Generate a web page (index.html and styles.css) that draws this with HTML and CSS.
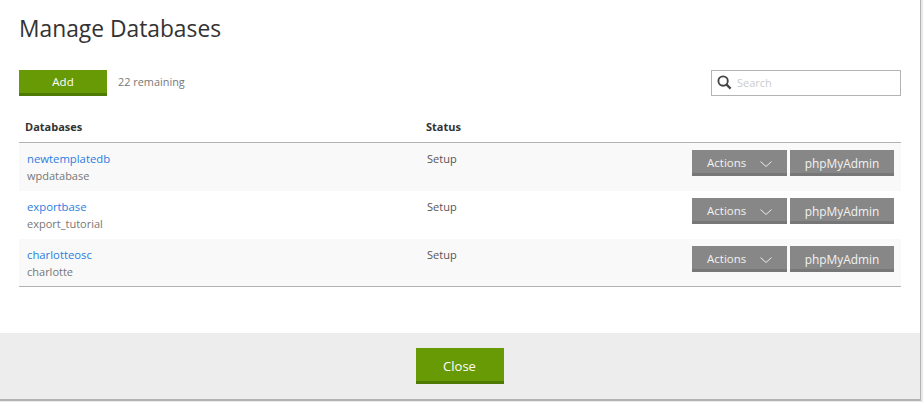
FILE: index.html
```html
<!DOCTYPE html>
<html lang="en">
<head>
  <meta charset="UTF-8" />
  <title>Manage Databases</title>
  <link rel="stylesheet" href="styles.css">
</head>
<body>

<div class="modal">
  <div class="modal-body">
    <h1>Manage Databases</h1>

    <div class="toolbar">
      <button class="btn btn-green btn-add">Add</button>
      <span class="remaining">22 remaining</span>
      <label class="search">
        <svg class="search-icon" width="15" height="15" viewBox="0 0 16 16">
          <circle cx="6.5" cy="6.5" r="5" fill="none" stroke="#444" stroke-width="2" />
          <path d="M10 10l4.5 4.5" stroke="#444" stroke-width="2.4" />
        </svg>
        <input type="text" placeholder="Search" />
      </label>
    </div>

    <table>
      <thead>
        <tr>
          <th class="col-name">Databases</th>
          <th class="col-status">Status</th>
          <th></th>
        </tr>
      </thead>
      <tbody>
        <tr>
          <td><a href="#">newtemplatedb</a><div class="sub">wpdatabase</div></td>
          <td>Setup</td>
          <td class="actions">
            <button class="btn btn-gray btn-actions">Actions
              <svg width="12" height="6" viewBox="0 0 12 6"><path d="M.5.5l5.5 5 5.5-5" fill="none" stroke="#eee" /></svg>
            </button><button class="btn btn-gray btn-php">phpMyAdmin</button>
          </td>
        </tr>
        <tr>
          <td><a href="#">exportbase</a><div class="sub">export_tutorial</div></td>
          <td>Setup</td>
          <td class="actions">
            <button class="btn btn-gray btn-actions">Actions
              <svg width="12" height="6" viewBox="0 0 12 6"><path d="M.5.5l5.5 5 5.5-5" fill="none" stroke="#eee" /></svg>
            </button><button class="btn btn-gray btn-php">phpMyAdmin</button>
          </td>
        </tr>
        <tr>
          <td><a href="#">charlotteosc</a><div class="sub">charlotte</div></td>
          <td>Setup</td>
          <td class="actions">
            <button class="btn btn-gray btn-actions">Actions
              <svg width="12" height="6" viewBox="0 0 12 6"><path d="M.5.5l5.5 5 5.5-5" fill="none" stroke="#eee" /></svg>
            </button><button class="btn btn-gray btn-php">phpMyAdmin</button>
          </td>
        </tr>
      </tbody>
    </table>
  </div>

  <div class="modal-footer">
    <button class="btn btn-green btn-close">Close</button>
  </div>
</div>

</body>
</html>
```

FILE: styles.css
```css
html, body {
  height: 100%;
}
body {
  margin: 0;
  background: #e9e9e9;
  font-family: "Open Sans", "Noto Sans", sans-serif;
  color: #333;
  overflow: hidden;
}
.modal {
  width: 921px;
  height: 401px;
  box-sizing: border-box;
  background: #fff;
  border-right: 1px solid #b3b3b3;
  border-bottom: 2px solid #b3b3b3;
  display: flex;
  flex-direction: column;
}
.modal-body {
  flex: 1;
  padding: 0 19px;
}
h1 {
  margin: 0;
  padding-top: 14px;
  font-size: 22.8px;
  font-weight: 400;
  line-height: 30px;
  color: #333;
}
.toolbar {
  display: flex;
  align-items: flex-start;
  margin-top: 26px;
  height: 26px;
}
.btn {
  border: 0;
  padding: 0;
  margin: 0;
  font-family: inherit;
  color: #fff;
  cursor: pointer;
  box-sizing: border-box;
}
.btn-green {
  background: #689a06;
  border-bottom: 3px solid #4f7a04;
}
.btn-add {
  width: 88px;
  height: 26px;
  font-size: 11.5px;
}
.remaining {
  margin-left: 11px;
  font-size: 10.9px;
  line-height: 24px;
  color: #777;
}
.search {
  margin-left: auto;
  width: 190px;
  height: 26px;
  box-sizing: border-box;
  border: 1px solid #b3b3b3;
  display: flex;
  align-items: center;
  padding-left: 5px;
  padding-bottom: 2px;
}
.search input {
  border: 0;
  outline: 0;
  padding: 0;
  margin-left: 5px;
  flex: 1;
  min-width: 0;
  font-family: inherit;
  font-size: 11px;
}
.search input::placeholder {
  color: #ccc;
}
table {
  width: 100%;
  margin-top: 20px;
  border-collapse: separate;
  border-spacing: 0;
  border-bottom: 1px solid #b3b3b3;
}
th {
  height: 27px;
  padding: 0 0 6px 6px;
  box-sizing: border-box;
  text-align: left;
  font-size: 11px;
  font-weight: 700;
  color: #333;
  border-bottom: 1px solid #b3b3b3;
}
.col-name {
  width: 401px;
}
td {
  height: 48px;
  box-sizing: border-box;
  padding: 7px 0 0 7px;
  vertical-align: top;
  font-size: 11px;
  line-height: 17px;
  color: #555;
}
tbody tr:last-child td {
  height: 47px;
}
td:first-child {
  padding-left: 8px;
}
tbody tr:nth-child(odd) {
  background: #f9f9f9;
}
a {
  color: #2a7de1;
  text-decoration: none;
  font-size: 11.3px;
}
.sub {
  color: #777;
}
td.actions {
  padding: 7px 7px 0 0;
  text-align: right;
  white-space: nowrap;
}
.btn-gray {
  height: 26px;
  padding-top: 2px;
  vertical-align: top;
  background: #878787;
  border-bottom: 3px solid #777;
  font-size: 11.5px;
  color: #f2f2f2;
}
.btn-actions {
  width: 95px;
  margin-right: 3px;
  text-align: left;
  padding-left: 15px;
}
.btn-actions svg {
  margin-left: 11px;
}
.btn-php {
  width: 104px;
  font-size: 11.9px;
}
.modal-footer {
  height: 66px;
  flex-shrink: 0;
  background: #ededed;
  display: flex;
  justify-content: center;
  padding-top: 15px;
  box-sizing: border-box;
  padding-right: 1px;
}
.btn-close {
  width: 88px;
  height: 36px;
  padding-top: 3px;
  font-size: 13px;
}
```
